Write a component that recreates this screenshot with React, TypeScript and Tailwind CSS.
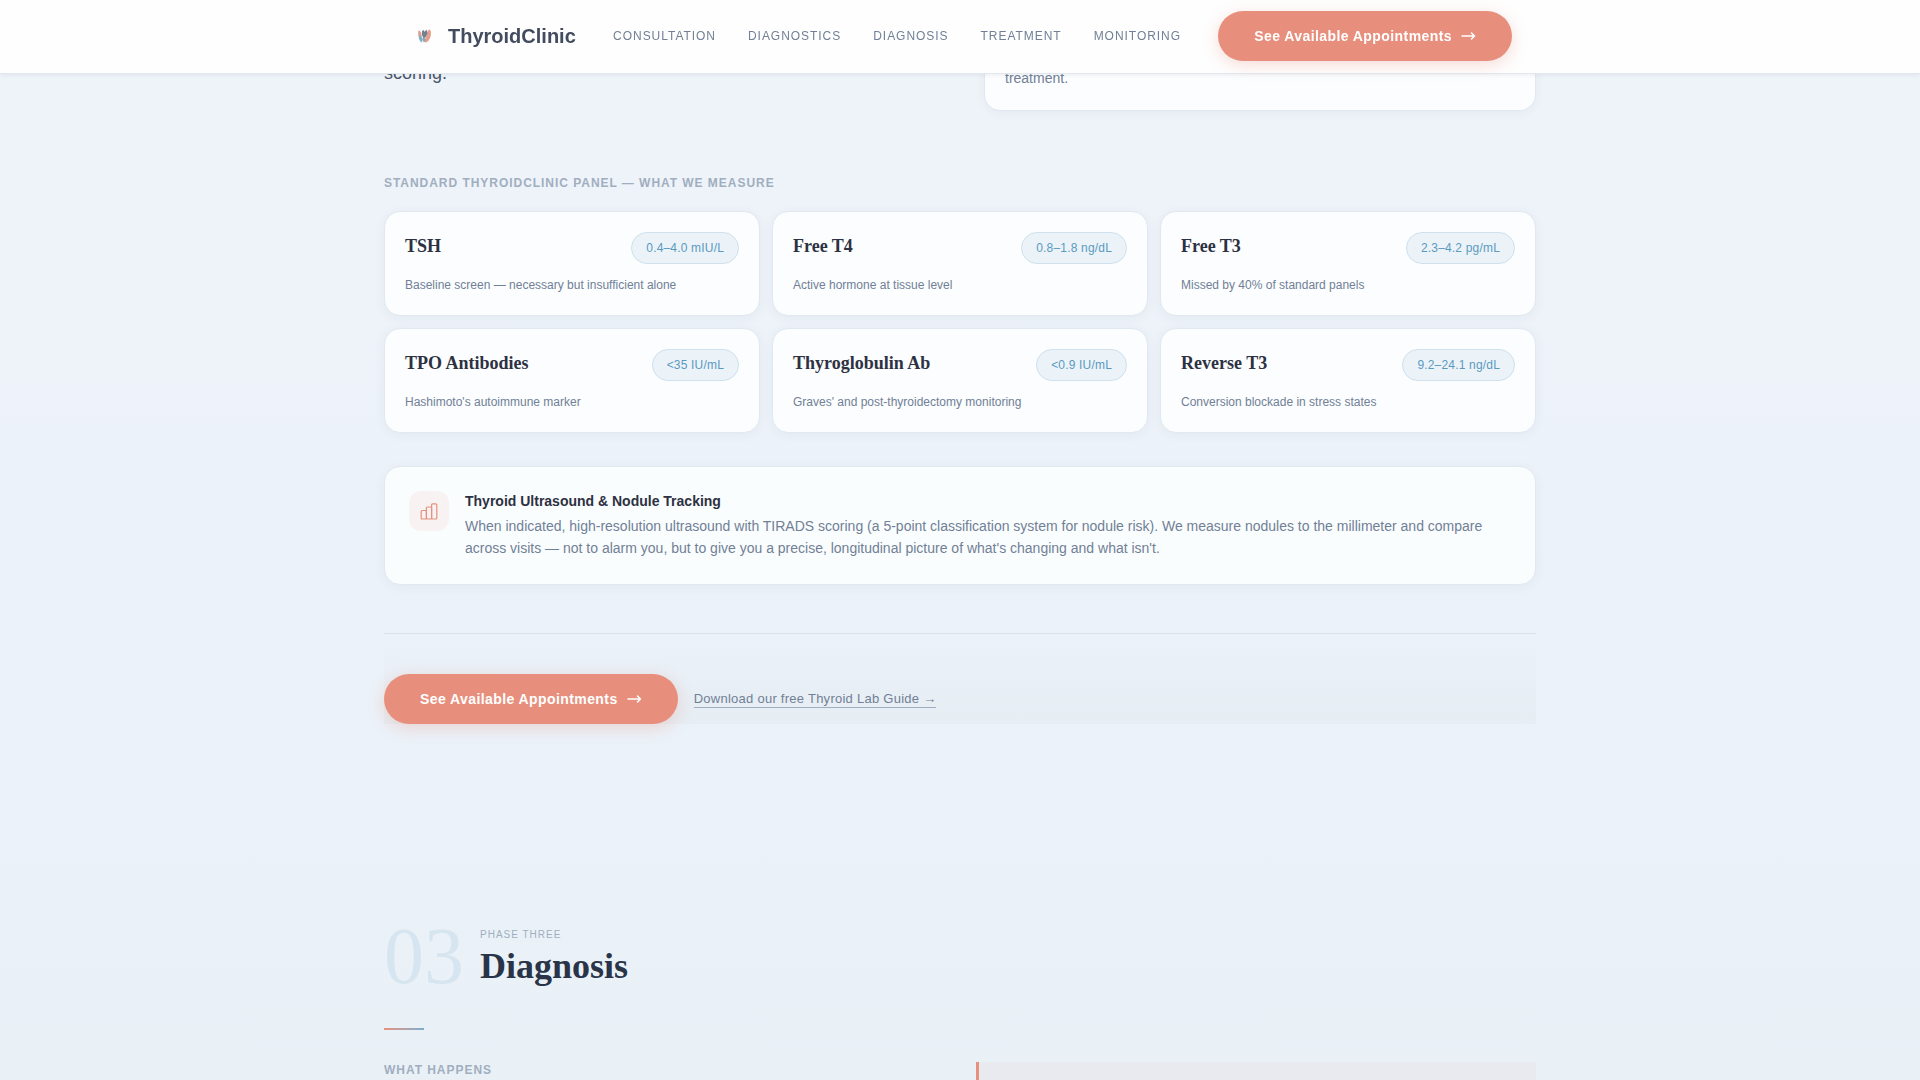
const navLinks = ["Consultation", "Diagnostics", "Diagnosis", "Treatment", "Monitoring"]

const markers = [
    { name: "TSH", range: "0.4–4.0 mIU/L", note: "Baseline screen — necessary but insufficient alone" },
    { name: "Free T4", range: "0.8–1.8 ng/dL", note: "Active hormone at tissue level" },
    { name: "Free T3", range: "2.3–4.2 pg/mL", note: "Missed by 40% of standard panels" },
    { name: "TPO Antibodies", range: "<35 IU/mL", note: "Hashimoto's autoimmune marker" },
    { name: "Thyroglobulin Ab", range: "<0.9 IU/mL", note: "Graves' and post-thyroidectomy monitoring" },
    { name: "Reverse T3", range: "9.2–24.1 ng/dL", note: "Conversion blockade in stress states" },
]

function Logo() {
    return (
        <svg className="h-8 w-8" viewBox="0 0 32 32" aria-hidden="true">
            <path d="M10.5 10.5c1-.5 2.500 1 3 3.500l.5 4-2 1c-1.500-1.500-2.500-5-1.500-8.500z" fill="#dfa194" />
            <path d="M10.800 15.500c1.500 0 3 1.500 3.700 4l-.5 3c-2-.5-3.500-3-3.200-7z" fill="#7fb0c6" />
            <path d="M22 9.500c1.500 2 1.200 7-.5 9.500-1 2-2.500 3.500-4.500 3.500l-.5-3c2-1.500 2-4 2.500-6.500.5-2 1.500-3.500 3-3.500z" fill="#e79f8c" />
            <path d="M14 11l2-1 .5 2 2-2.500 1 3.500-1.500 4-2.500 1.500-1.500-3.500z" fill="#74808f" />
            <path d="M14 18.500l2.800-1.500 1 3.500-2 2z" fill="#93a3b2" />
        </svg>
    )
}

function AppointmentsLink() {
    return (
        <a
            href="#appointments"
            className="inline-flex items-center gap-2 rounded-full bg-[#e78f7c] px-9 py-3.5 text-sm leading-[22px] font-bold tracking-[0.03em] whitespace-nowrap text-white shadow-[0_4px_16px_rgba(232,144,124,0.3)]"
        >
            See Available Appointments
            <svg
                className="h-4 w-4"
                viewBox="0 0 16 16"
                fill="none"
                stroke="currentColor"
                strokeWidth="1.5"
                strokeLinecap="round"
                strokeLinejoin="round"
                aria-hidden="true"
            >
                <path d="M2 8h12.500M11.500 5l3 3-3 3" />
            </svg>
        </a>
    )
}

function Header() {
    return (
        <header className="fixed inset-x-0 top-0 z-50 border-b border-[#e2e8f0] bg-[#fefefe] shadow-[0_1px_4px_rgba(45,55,72,0.08)]">
            <div className="mx-auto flex max-w-6xl items-center justify-between px-6 pt-[11px] pb-3">
                <a href="#top" className="flex items-center gap-2 text-xl font-bold text-[#434c5e]">
                    <Logo />
                    ThyroidClinic
                </a>
                <nav className="flex gap-8">
                    {navLinks.map((label) => (
                        <a key={label} href={`#${label.toLowerCase()}`} className="text-xs tracking-[0.08em] text-[#718096] uppercase">
                            {label}
                        </a>
                    ))}
                </nav>
                <AppointmentsLink />
            </div>
        </header>
    )
}

function MarkerCard({ name, range, note }: { name: string; range: string; note: string }) {
    return (
        <article className="rounded-2xl border border-[#e1e8f0] bg-[#fbfdfe] p-5 shadow-[0_2px_12px_rgba(45,55,72,0.05)]">
            <div className="flex items-start justify-between">
                <h3 className="font-['Liberation_Serif',serif] text-lg leading-7 font-bold text-[#2d3142]">{name}</h3>
                <span className="rounded-full border border-[#cfe1ed] bg-[#ebf3f9] px-3.5 py-1.5 text-xs leading-[18px] tracking-[0.015em] text-[#5b9abf]">
                    {range}
                </span>
            </div>
            <p className="mt-3 text-xs leading-[19px] text-[#718096]">{note}</p>
        </article>
    )
}

export default function App() {
    return (
        <div className="min-h-screen overflow-hidden bg-linear-to-b from-[#eff4f9] via-[#ecf2f9] to-[#e9f1f7] font-['Liberation_Sans',sans-serif]">
            <Header />
            <main className="mx-auto max-w-6xl pt-14">
                <section id="diagnostics">
                    <div className="grid grid-cols-2 gap-12">
                        <p className="text-lg leading-[34px] text-[#4a5568]">scoring.</p>
                        <div className="rounded-b-2xl border border-t-0 border-[#e1e8f0] bg-[#fbfdfe] px-5 pt-[11px] pb-[21px] text-sm leading-[22px] text-[#718096] shadow-[0_2px_12px_rgba(45,55,72,0.05)]">
                            treatment.
                        </div>
                    </div>

                    <h2 className="mt-16 text-xs leading-4 font-bold tracking-[0.08em] text-[#a0aec0] uppercase">
                        Standard ThyroidClinic Panel — What We Measure
                    </h2>
                    <div className="mt-5 grid grid-cols-3 gap-3">
                        {markers.map((marker) => (
                            <MarkerCard key={marker.name} {...marker} />
                        ))}
                    </div>

                    <div className="mt-[33px] flex gap-4 rounded-2xl border border-[#e1e8f0] bg-[#fafdfe] p-6 pb-[25px] shadow-[0_2px_12px_rgba(45,55,72,0.05)]">
                        <div className="flex h-10 w-10 shrink-0 items-center justify-center rounded-xl bg-[#f8f2f3]">
                            <svg
                                className="h-5 w-5"
                                viewBox="0 0 20 20"
                                fill="none"
                                stroke="#e5917d"
                                strokeWidth="1.2"
                                strokeLinejoin="round"
                                aria-hidden="true"
                            >
                                <rect x="2.200" y="9.500" width="5.200" height="8.500" rx="1" />
                                <rect x="7.400" y="6" width="5.200" height="12" rx="1" />
                                <rect x="12.600" y="2.800" width="5.200" height="15.200" rx="1" />
                            </svg>
                        </div>
                        <div className="text-sm">
                            <h3 className="font-bold text-[#2d3142]">Thyroid Ultrasound &amp; Nodule Tracking</h3>
                            <p className="mt-1 leading-[22px] text-[#718096]">
                                When indicated, high-resolution ultrasound with TIRADS scoring (a 5-point classification system for nodule risk). We
                                measure nodules to the millimeter and compare across visits — not to alarm you, but to give you a precise,
                                longitudinal picture of what's changing and what isn't.
                            </p>
                        </div>
                    </div>

                    <div className="mt-12 flex items-center gap-4 border-t border-[#d8e2ea] bg-linear-to-b from-transparent to-[#e6edf3] pt-10">
                        <AppointmentsLink />
                        <a href="#lab-guide" className="border-b border-[#a0aec0] text-[13px] leading-4 tracking-[0.02em] text-[#718096]">
                            Download our free Thyroid Lab Guide →
                        </a>
                    </div>
                </section>

                <section id="diagnosis" className="pt-48">
                    <div className="flex items-center gap-4">
                        <span className="font-['Liberation_Serif',serif] text-[80px] leading-20 text-[#d6e5f0]">03</span>
                        <div>
                            <p className="text-[10px] leading-[18px] tracking-widest text-[#a0aec0] uppercase">Phase Three</p>
                            <h2 className="mt-0.5 font-['Liberation_Serif',serif] text-4xl font-bold text-[#2a3449]">Diagnosis</h2>
                        </div>
                    </div>
                    <div className="mt-8 h-0.5 w-10 bg-linear-to-r from-[#e5917d] to-[#7aaccc]" />
                    <div className="mt-8 grid grid-cols-2 gap-8">
                        <h3 className="text-xs leading-4 font-bold tracking-[0.08em] text-[#a0aec0] uppercase">What Happens</h3>
                        <div className="h-[18px] border-l-3 border-[#e5917d] bg-[#e9eaef]" />
                    </div>
                </section>
            </main>
        </div>
    )
}
